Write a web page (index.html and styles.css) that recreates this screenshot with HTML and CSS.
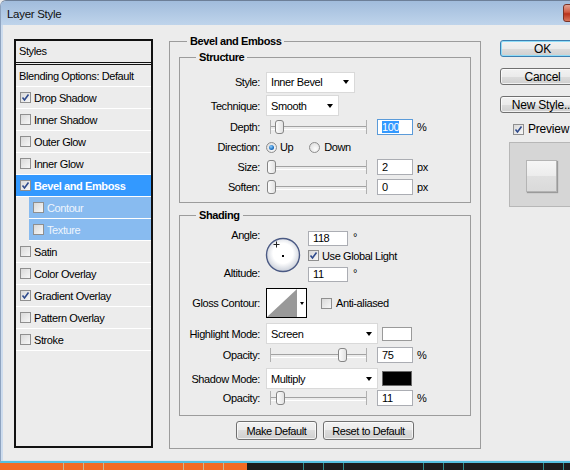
FILE: index.html
```html
<!DOCTYPE html>
<html lang="en">
  <head>
    <meta charset="UTF-8" />
    <meta name="viewport" content="width=device-width, initial-scale=1.0" />
    <title>Layer Style</title>
    <link rel="stylesheet" href="styles.css">
  </head>

  <body>
    <div class="dialog">
      <!-- title bar -->
      <div class="titlebar">
        <span class="title">Layer Style</span>
        <span class="close"></span>
      </div>

      <div class="client">
        <!-- styles list -->
        <div class="styles-panel">
          <div class="styles-head">Styles</div>
          <ul class="style-list">
            <li class="item plain">Blending Options: Default</li>
            <li class="item"><span class="cb"><svg viewBox="0 0 9 9" width="9" height="9"><path d="M1.5 4.5 3.5 7 7.5 1.5" fill="none" stroke="#2e4a8c" stroke-width="1.6"/></svg></span>Drop Shadow</li>
            <li class="item"><span class="cb"></span>Inner Shadow</li>
            <li class="item"><span class="cb"></span>Outer Glow</li>
            <li class="item"><span class="cb"></span>Inner Glow</li>
            <li class="item active"><span class="cb"><svg viewBox="0 0 9 9" width="9" height="9"><path d="M1.5 4.5 3.5 7 7.5 1.5" fill="none" stroke="#2e4a8c" stroke-width="1.6"/></svg></span>Bevel and Emboss</li>
            <li class="item sub"><span class="cb"></span>Contour</li>
            <li class="item sub"><span class="cb"></span>Texture</li>
            <li class="item"><span class="cb"></span>Satin</li>
            <li class="item"><span class="cb"></span>Color Overlay</li>
            <li class="item"><span class="cb"><svg viewBox="0 0 9 9" width="9" height="9"><path d="M1.5 4.5 3.5 7 7.5 1.5" fill="none" stroke="#2e4a8c" stroke-width="1.6"/></svg></span>Gradient Overlay</li>
            <li class="item"><span class="cb"></span>Pattern Overlay</li>
            <li class="item"><span class="cb"></span>Stroke</li>
          </ul>
        </div>

        <!-- bevel and emboss -->
        <fieldset class="group main">
          <legend>Bevel and Emboss</legend>

          <fieldset class="group structure">
            <legend>Structure</legend>
            <div class="row h24">
              <span class="label">Style:</span>
              <div class="select w-style">Inner Bevel<i class="arrow"></i></div>
            </div>
            <div class="row h23">
              <span class="label">Technique:</span>
              <div class="select w-tech">Smooth<i class="arrow"></i></div>
            </div>
            <div class="row h19">
              <span class="label">Depth:</span>
              <div class="slider"><span class="thumb" style="--v: 9"></span></div>
              <div class="field focus"><span class="sel">100</span></div>
              <span class="unit">%</span>
            </div>
            <div class="row h22">
              <span class="label">Direction:</span>
              <span class="radio on"></span><span class="radio-text">Up</span>
              <span class="radio down"></span><span class="radio-text">Down</span>
            </div>
            <div class="row h18">
              <span class="label">Size:</span>
              <div class="slider"><span class="thumb" style="--v: 0"></span></div>
              <div class="field">2</div>
              <span class="unit">px</span>
            </div>
            <div class="row h22">
              <span class="label">Soften:</span>
              <div class="slider"><span class="thumb" style="--v: 0"></span></div>
              <div class="field">0</div>
              <span class="unit">px</span>
            </div>
          </fieldset>

          <fieldset class="group shading">
            <legend>Shading</legend>
            <div class="angle">
              <div class="angle-labels">
                <span>Angle:</span>
                <span class="alt-label">Altitude:</span>
              </div>
              <svg class="dial" width="36" height="36" viewBox="0 0 36 36">
                <defs>
                  <radialGradient id="dialFill" cx="50%" cy="45%" r="55%">
                    <stop offset="0.55" stop-color="#ffffff"/>
                    <stop offset="1" stop-color="#c9ced8"/>
                  </radialGradient>
                </defs>
                <circle cx="18" cy="18" r="16.5" fill="url(#dialFill)" stroke="#4b5a84" stroke-width="1.4"/>
                <rect x="17" y="18" width="2" height="2" fill="#000"/>
                <path d="M8.5 7.5h6M11.5 4.5v6" stroke="#222" stroke-width="1"/>
              </svg>
              <div class="angle-fields">
                <div class="line">
                  <div class="field w40">118</div>
                  <span class="deg">°</span>
                </div>
                <div class="line check-line">
                  <span class="cb"><svg viewBox="0 0 9 9" width="9" height="9"><path d="M1.5 4.5 3.5 7 7.5 1.5" fill="none" stroke="#2e4a8c" stroke-width="1.6"/></svg></span>
                  <span class="cb-text">Use Global Light</span>
                </div>
                <div class="line alt-line">
                  <div class="field w40">11</div>
                  <span class="deg">°</span>
                </div>
              </div>
            </div>

            <div class="row h30 gloss">
              <span class="label">Gloss Contour:</span>
              <div class="contour">
                <svg width="30" height="28" viewBox="0 0 30 28">
                  <rect width="30" height="28" fill="#fff"/>
                  <polygon points="0,28 30,0 30,28" fill="#999"/>
                </svg>
                <span class="contour-drop"><i class="arrow small"></i></span>
              </div>
              <span class="cb anti"></span>
              <span class="cb-text">Anti-aliased</span>
            </div>

            <div class="row h21 mt5">
              <span class="label">Highlight Mode:</span>
              <div class="select w-mode">Screen<i class="arrow"></i></div>
              <span class="swatch white"></span>
            </div>
            <div class="row h22">
              <span class="label">Opacity:</span>
              <div class="slider"><span class="thumb" style="--v: 75"></span></div>
              <div class="field">75</div>
              <span class="unit">%</span>
            </div>
            <div class="row h21 mt2">
              <span class="label">Shadow Mode:</span>
              <div class="select w-mode">Multiply<i class="arrow"></i></div>
              <span class="swatch black"></span>
            </div>
            <div class="row h18">
              <span class="label">Opacity:</span>
              <div class="slider"><span class="thumb" style="--v: 10"></span></div>
              <div class="field">11</div>
              <span class="unit">%</span>
            </div>
          </fieldset>

          <div class="defaults">
            <button class="btn w-make">Make Default</button>
            <button class="btn w-reset">Reset to Default</button>
          </div>
        </fieldset>

        <!-- buttons and preview -->
        <div class="actions">
          <button class="btn big default">OK</button>
          <button class="btn big">Cancel</button>
          <button class="btn big">New Style...</button>
          <div class="preview-check">
            <span class="cb"><svg viewBox="0 0 9 9" width="9" height="9"><path d="M1.5 4.5 3.5 7 7.5 1.5" fill="none" stroke="#2e4a8c" stroke-width="1.6"/></svg></span>
            <span class="cb-text">Preview</span>
          </div>
          <div class="preview">
            <div class="preview-square"></div>
          </div>
        </div>
      </div>
    </div>

    <!-- task bar strip under the window -->
    <div class="taskbar">
      <div class="tb-orange"></div>
      <div class="tb-dark"></div>
    </div>
  </body>
</html>
```

FILE: styles.css
```css
* {
  margin: 0;
  padding: 0;
  box-sizing: border-box;
}

body {
  width: 570px;
  height: 470px;
  overflow: hidden;
  background: #ececec;
  color: #000;
  font: 11px "Liberation Sans", Arial, sans-serif;
  letter-spacing: -0.4px;
}

.dialog {
  width: 600px;
  border-top: 1px solid #6d7f98;
  border-left: 1px solid #8ea3bf;
  border-top-left-radius: 6px;
  border-bottom: 2px solid #55c0e0;
  background: #cddcee;
  overflow: hidden;
}

/* title bar */
.titlebar {
  height: 24px;
  display: flex;
  align-items: flex-start;
  padding-left: 6px;
  background: linear-gradient(#a1bcdc, #bfd4eb);
}

.titlebar .title {
  flex: 0 0 556px;
  line-height: 26px;
  font-size: 11.5px;
  letter-spacing: -0.3px;
  color: #111;
}

.titlebar .close {
  width: 44px;
  height: 18px;
  margin-top: 3px;
  border: 1px solid #7a3428;
  border-radius: 3px;
  background: linear-gradient(#e4a494, #cf5a42 45%, #b8321c 55%, #d8765c);
}

.client {
  height: 436px;
  margin-left: 2px;
  display: flex;
  align-items: flex-start;
  background: #ececec;
  border-bottom: 1px solid #dde6ef;
}

/* styles list */
.styles-panel {
  width: 139px;
  height: 409px;
  margin: 14px 0 0 11px;
  border: 2px solid #111;
  background: #ececec;
}

.styles-head {
  height: 22px;
  line-height: 21px;
  padding-left: 3px;
  border-bottom: 1px solid #111;
}

.style-list {
  list-style: none;
  margin-top: 1px;
  border-top: 1px solid #111;
}

.style-list .item {
  height: 22px;
  display: flex;
  align-items: center;
  padding-left: 4px;
  border-bottom: 1px solid #fff;
}

.style-list .item.plain {
  padding-left: 3px;
}

.style-list .item.active {
  background: #3399ff;
  color: #fff;
  font-weight: bold;
}

.style-list .item.sub {
  margin-left: 13px;
  background: #88bbf0;
  color: #eef5fd;
}

.style-list .cb {
  margin-right: 3px;
}

/* checkbox */
.cb {
  width: 11px;
  height: 11px;
  flex: none;
  display: flex;
  align-items: center;
  justify-content: center;
  border: 1px solid #8f8f8f;
  background: linear-gradient(135deg, #d9d9d9, #f7f7f7);
}

.cb-text {
  margin-left: 3px;
}

/* group boxes */
.group {
  border: 1px solid #9c9c9c;
  min-width: 0;
}

.group legend {
  line-height: 13px;
  font-weight: bold;
  padding: 0 3px;
}

.main {
  width: 312px;
  margin: 10px 0 0 16px;
  padding: 3px 9px 8px;
}

.main > legend {
  margin-left: 8px;
}

.structure legend,
.shading legend {
  margin-left: 16px;
}

.structure {
  padding: 6px 0 4px;
}

.shading {
  margin-top: 6px;
  padding: 6px 0 8px;
}

.row {
  display: flex;
  align-items: center;
}

.row .label {
  width: 80px;
  margin-right: 6px;
  text-align: right;
}

.h18 { height: 18px; }
.h19 { height: 19px; }
.h21 { height: 21px; }
.h22 { height: 22px; }
.h23 { height: 23px; }
.h24 { height: 24px; }
.h30 { height: 30px; }
.mt2 { margin-top: 2px; }
.mt5 { margin-top: 5px; }

/* drop-down */
.select {
  height: 21px;
  display: flex;
  align-items: center;
  padding-left: 4px;
  border: 1px solid #d9d9d9;
  background: #fff;
}

.w-style { width: 89px; }
.w-tech { width: 73px; }
.w-mode { width: 112px; }

.arrow {
  margin-left: auto;
  margin-right: 5px;
  border-left: 3.5px solid transparent;
  border-right: 3.5px solid transparent;
  border-top: 4px solid #000;
}

.arrow.small {
  margin: 0;
  border-left-width: 2.5px;
  border-right-width: 2.5px;
  border-top-width: 3px;
}

/* slider */
.slider {
  position: relative;
  width: 97px;
  height: 14px;
  margin-left: 4px;
  border-left: 1px solid #b0b0b0;
  border-right: 1px solid #b0b0b0;
}

.slider::before {
  content: "";
  display: block;
  margin-top: 6px;
  height: 2px;
  border-top: 1px solid #a2a2a2;
  border-bottom: 1px solid #fff;
}

.slider .thumb {
  position: absolute;
  top: 0;
  left: calc(var(--v) * 0.95px - 4.5px);
  width: 9px;
  height: 14px;
  border: 1px solid #858585;
  border-radius: 3px;
  background: linear-gradient(90deg, #fdfdfd, #e2e2e2);
}

/* text field */
.field {
  width: 36px;
  height: 16px;
  margin-left: 10px;
  padding-left: 4px;
  line-height: 14px;
  border: 1px solid #abadb3;
  background: #fff;
}

.field.focus {
  border-color: #5b9bd9;
}

.field .sel {
  background: #3399ff;
  color: #fff;
}

.field.w40 {
  width: 40px;
  height: 15px;
  margin-left: 0;
  line-height: 13px;
}

.unit {
  margin-left: 4px;
}

.deg {
  margin-left: 5px;
  align-self: flex-start;
  line-height: 12px;
}

/* radio */
.radio {
  width: 11px;
  height: 11px;
  display: flex;
  align-items: center;
  justify-content: center;
  border: 1px solid #8d8d8d;
  border-radius: 50%;
  background: radial-gradient(circle at 60% 65%, #fdfdfd, #d8d8d8);
}

.radio.on::after {
  content: "";
  width: 5px;
  height: 5px;
  border-radius: 50%;
  background: radial-gradient(circle at 40% 35%, #8fd0ff, #1d6fc0 60%, #0e3f82);
}

.radio.down {
  margin-left: 16px;
}

.radio-text {
  margin-left: 3px;
}

.radio.down + .radio-text {
  margin-left: 4px;
}

/* angle */
.angle {
  display: flex;
  height: 54px;
}

.angle-labels {
  width: 80px;
  display: flex;
  flex-direction: column;
  align-items: flex-end;
  line-height: 14px;
}

.angle-labels .alt-label {
  margin-top: 24px;
}

.dial {
  margin: 9px 0 0 5px;
  flex: none;
}

.angle-fields {
  margin-left: 7px;
  padding-top: 3px;
  display: flex;
  flex-direction: column;
}

.angle-fields .line {
  display: flex;
  align-items: center;
}

.angle-fields .check-line {
  margin-top: 4px;
  height: 11px;
}

.angle-fields .alt-line {
  margin-top: 6px;
}

/* gloss contour */
.gloss {
  margin-top: 6px;
}

.contour {
  width: 41px;
  height: 30px;
  display: flex;
  border: 1px solid #000;
  background: #fff;
}

.contour svg {
  display: block;
}

.contour-drop {
  flex: 1;
  display: flex;
  align-items: center;
  justify-content: center;
}

.cb.anti {
  margin-left: 14px;
}

.gloss .cb-text {
  margin-left: 4px;
}

.swatch {
  width: 30px;
  height: 14px;
  margin-left: 4px;
  border: 1px solid #9a9a9a;
}

.swatch.white {
  background: #fff;
}

.swatch.black {
  height: 15px;
  background: #000;
  border-color: #6a6a6a;
}

/* buttons */
.btn {
  display: block;
  font: 11px "Liberation Sans", Arial, sans-serif;
  letter-spacing: -0.4px;
  color: #000;
  border: 1px solid #707070;
  border-radius: 3px;
  background: linear-gradient(#f2f2f2, #ebebeb 50%, #dddddd 50%, #cfcfcf);
  box-shadow: inset 0 0 0 1px rgba(255, 255, 255, 0.7);
}

.defaults {
  margin-top: 5px;
  display: flex;
  justify-content: center;
  gap: 6px;
}

.defaults .btn {
  height: 19px;
}

.w-make { width: 81px; }
.w-reset { width: 91px; }

.actions {
  width: 85px;
  margin: 5px 0 0 19px;
  display: flex;
  flex-direction: column;
}

.btn.big {
  width: 85px;
  height: 17px;
  margin-top: 11px;
  font-size: 12px;
  letter-spacing: -0.2px;
}

.btn.big.default {
  margin-top: 10px;
  border-color: #3c7fb1;
  box-shadow: inset 0 0 0 1px #8fdcf7;
}

.preview-check {
  margin: 10px 0 0 13px;
  height: 12px;
  display: flex;
  align-items: center;
  font-size: 12px;
  letter-spacing: -0.2px;
}

.preview-check .cb-text {
  margin-left: 4px;
}

.preview {
  width: 80px;
  height: 65px;
  margin: 7px 0 0 9px;
  padding: 17px 0 0 16px;
  border: 1px solid #b7b7b7;
  background: #d6d6d6;
}

.preview-square {
  width: 31px;
  height: 32px;
  border: 1px solid #b4b4b4;
  background: linear-gradient(#f6f6f6, #ececec 50%, #e0e0e0 50%, #dadada);
  box-shadow: 1px 1px 1px #9a9a9a;
}

/* task bar */
.taskbar {
  height: 7px;
  display: flex;
}

.tb-orange {
  width: 247px;
  background: #f26b25 linear-gradient(90deg, transparent 63px, #c9b894 63px 64px, transparent 64px 83px, #c9b894 83px 84px, transparent 84px 103px, #c9b894 103px 104px, transparent 104px) 0 0 / 120px 100% repeat-x;
}

.tb-dark {
  flex: 1;
  background: #1c1c1c linear-gradient(90deg, transparent 63px, #2f8d8d 63px 64px, transparent 64px 83px, #2f8d8d 83px 84px, transparent 84px 103px, #2f8d8d 103px 104px, transparent 104px) -7px 0 / 120px 100% repeat-x;
}
```
